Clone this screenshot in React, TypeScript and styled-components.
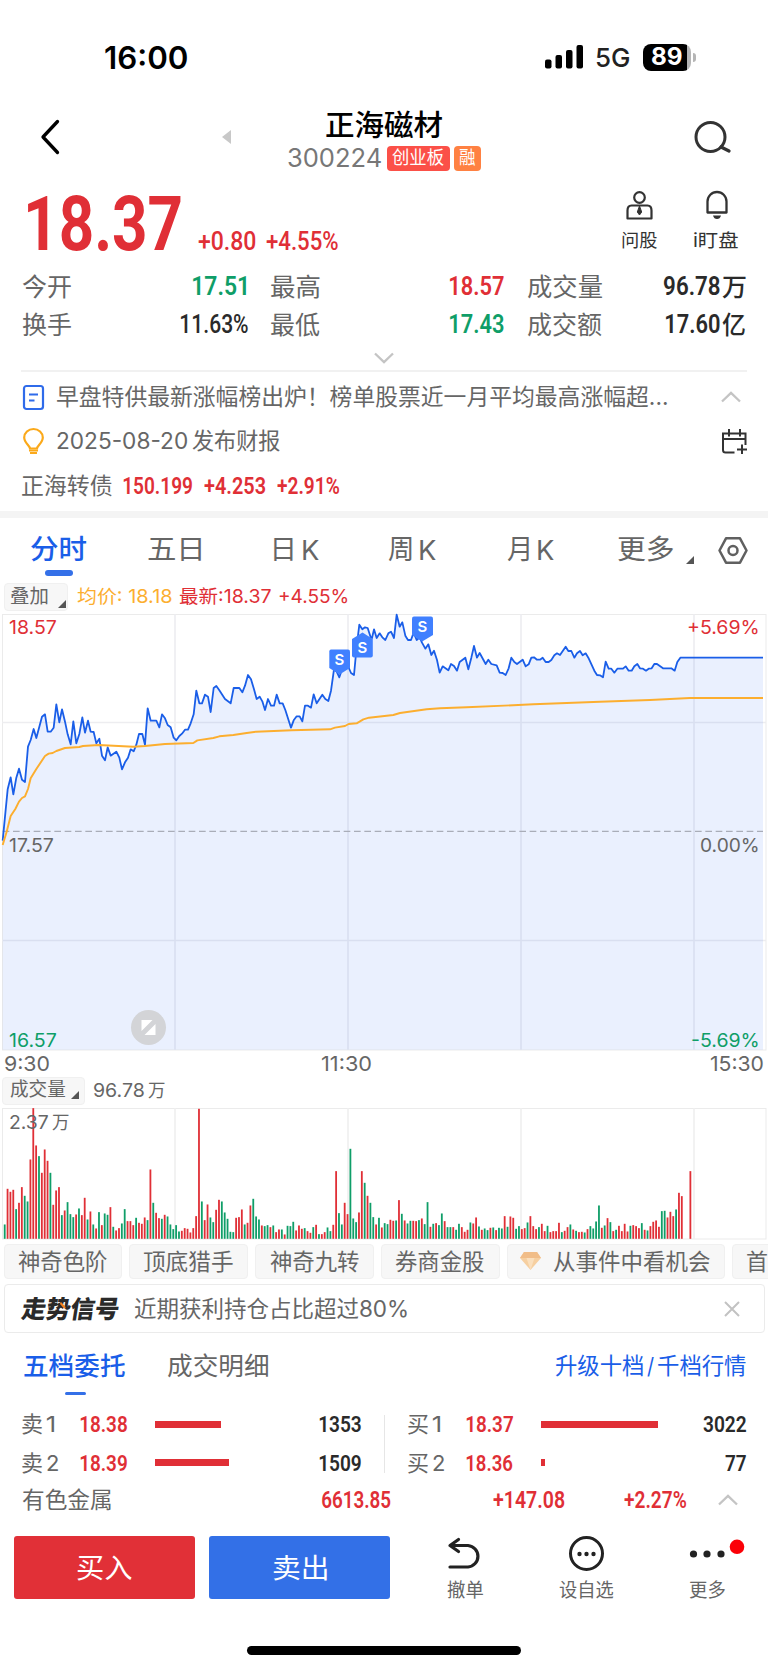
import React, { useLayoutEffect, useState } from "react";
import styled, { createGlobalStyle } from "styled-components";

const RED = "#e02f36";
const GREEN = "#0f9e68";
const BLUE = "#1a5ee8";
const INK = "#2a2a2a";
const GREY = "#666";
const SANS = 'Inter, "Noto Sans CJK SC", sans-serif';
const DIN = 'Roboto, "Noto Sans CJK SC", sans-serif';

const Global = createGlobalStyle`
  * { box-sizing: border-box; }
  body { margin: 0; background: #fff; font-family: ${SANS}; color: ${GREY}; }
  button { border: 0; padding: 0; font: inherit; background: none; }
`;

/* ---------- text whose glyph run fills a given width ---------- */

const TextBox = styled.span<{ $w: number; $ml: number; $dy: number }>`
  display: block;
  flex: none;
  width: ${(p) => p.$w}px;
  margin-left: ${(p) => p.$ml}px;
  margin-top: ${(p) => p.$dy}px;
  text-align: left;
`;

const TextRun = styled.span<{ $size: number; $weight: number; $color: string; $din?: boolean }>`
  display: inline-block;
  white-space: pre;
  line-height: 1;
  transform-origin: 0 50%;
  vertical-align: top;
  font-family: ${(p) => (p.$din ? DIN : SANS)};
  font-size: ${(p) => p.$size}px;
  font-weight: ${(p) => p.$weight};
  color: ${(p) => p.$color};
`;

type TProps = {
  t: string;
  w: number;
  s: number;
  c?: string;
  ml?: number;
  dy?: number;
  weight?: number;
  din?: boolean;
  skew?: number;
};

function T({ t, w, s, c = GREY, ml = 0, dy = 0, weight = 400, din, skew = 0 }: TProps) {
  const [transform, setTransform] = useState("none");
  useLayoutEffect(() => {
    const ctx = document.createElement("canvas").getContext("2d");
    if (!ctx) return;
    ctx.font = `${weight} ${s}px ${din ? DIN : SANS}`;
    const m = ctx.measureText(t);
    const k = w / (m.actualBoundingBoxRight + m.actualBoundingBoxLeft);
    setTransform(`translateX(${m.actualBoundingBoxLeft * k}px) scaleX(${k}) skewX(${-skew}deg)`);
  }, [t, w, s, weight, din, skew]);
  return (
    <TextBox $w={w} $ml={ml} $dy={dy}>
      <TextRun $size={s} $weight={weight} $color={c} $din={din} style={{ transform }}>
        {t}
      </TextRun>
    </TextBox>
  );
}

const Num = (p: TProps) => <T din weight={600} {...p} />;

/* ---------- layout parts ---------- */

const Page = styled.div`
  width: 768px;
  height: 1669px;
  overflow: hidden;
  background: #fff;
  display: flex;
  flex-direction: column;
`;

const Row = styled.div<{ $h: number; $pl?: number; $mt?: number }>`
  flex: none;
  display: flex;
  align-items: center;
  height: ${(p) => p.$h}px;
  padding-left: ${(p) => p.$pl ?? 22}px;
  margin-top: ${(p) => p.$mt ?? 0}px;
`;

const Icon = styled.svg<{ $ml?: number; $dy?: number }>`
  display: block;
  flex: none;
  fill: none;
  overflow: visible;
  margin-left: ${(p) => p.$ml ?? 0}px;
  margin-top: ${(p) => p.$dy ?? 0}px;
`;

const Battery = styled.div`
  position: relative;
  flex: none;
  width: 48px;
  height: 27px;
  margin-left: 14px;
  border-radius: 8px;
  background: linear-gradient(90deg, #000 44px, #b5b5b5 44px);
  display: flex;
  align-items: center;
  &::after {
    content: "";
    position: absolute;
    left: 50px;
    top: 9px;
    width: 3px;
    height: 9px;
    border-radius: 0 3px 3px 0;
    background: #b5b5b5;
  }
`;

const Header = styled.header`
  flex: none;
  height: 75px;
  margin-top: 31px;
  display: flex;
  align-items: center;
`;

const Titles = styled.div`
  width: 193px;
  margin: 0 0 5px 57px;
`;

const TitleLine = styled.div<{ $h: number; $pl?: number }>`
  height: ${(p) => p.$h}px;
  padding-left: ${(p) => p.$pl ?? 0}px;
  display: flex;
  align-items: center;
`;

const Tag = styled.span<{ $w: number; $ml: number; $bg: string }>`
  flex: none;
  width: ${(p) => p.$w}px;
  height: 25px;
  margin-left: ${(p) => p.$ml}px;
  padding-top: 1px;
  border-radius: 4px;
  background: ${(p) => p.$bg};
  display: flex;
  align-items: center;
  justify-content: center;
`;

const Quote = styled.section`
  flex: none;
  height: 78px;
  padding-left: 28px;
  display: flex;
`;

const Tool = styled.button<{ $w: number; $ml: number }>`
  width: ${(p) => p.$w}px;
  margin-left: ${(p) => p.$ml}px;
  display: flex;
  flex-direction: column;
  align-items: center;
`;

const Divider = styled.hr`
  flex: none;
  width: 726px;
  height: 2px;
  margin: 3px 0 0 21px;
  border: 0;
  background: #f1f1f1;
`;

const Band = styled.div`
  flex: none;
  height: 7px;
  margin-top: 2px;
  background: #f4f4f4;
`;

const Marker = styled.div<{ $w: number; $h: number; $ml: number; $mt: number }>`
  flex: none;
  width: ${(p) => p.$w}px;
  height: ${(p) => p.$h}px;
  margin: ${(p) => p.$mt}px 0 0 ${(p) => p.$ml}px;
  border-radius: 3px;
  background: #3470e8;
`;

const Chip = styled.button<{ $w: number; $h: number; $ml?: number }>`
  flex: none;
  width: ${(p) => p.$w}px;
  height: ${(p) => p.$h}px;
  margin-left: ${(p) => p.$ml ?? 0}px;
  padding-top: 1px;
  border: 1px solid #f0f0f0;
  border-radius: 4px;
  background: #f7f7f7;
  display: flex;
  align-items: center;
`;

const ChartBox = styled.div<{ $h: number; $mt: number }>`
  position: relative;
  flex: none;
  width: 768px;
  height: ${(p) => p.$h}px;
  margin-top: ${(p) => p.$mt}px;
  & > svg { display: block; }
`;

const Label = styled.div<{ $x: number; $y: number }>`
  position: absolute;
  left: ${(p) => p.$x}px;
  top: ${(p) => p.$y}px;
`;

const SignalBox = styled.div`
  flex: none;
  width: 761px;
  height: 49px;
  margin: 5px 0 0 4px;
  padding: 1px 0 0 17px;
  border: 1px solid #ebebeb;
  border-radius: 4px;
  display: flex;
  align-items: center;
`;

const Logo = styled.div`
  position: relative;
  & > svg {
    position: absolute;
    left: 38px;
    top: 5px;
  }
`;

const Book = styled.div`
  flex: none;
  height: 77px;
  margin-top: 10px;
  display: flex;
  align-items: center;
`;

const BookSide = styled.div<{ $w: number }>`
  width: ${(p) => p.$w}px;
`;

const BookRule = styled.div`
  width: 1px;
  height: 58px;
  background: #e6e6e6;
`;

const DepthSlot = styled.div<{ $w: number; $ml: number }>`
  flex: none;
  width: ${(p) => p.$w}px;
  margin-left: ${(p) => p.$ml}px;
`;

const DepthBar = styled.div<{ $w: number }>`
  width: ${(p) => p.$w}px;
  height: 7px;
  background: ${RED};
`;

const Trade = styled.button<{ $bg: string; $ml: number }>`
  flex: none;
  width: 181px;
  height: 63px;
  margin-left: ${(p) => p.$ml}px;
  padding-top: 2px;
  border-radius: 3px;
  background: ${(p) => p.$bg};
  display: flex;
  align-items: center;
  justify-content: center;
`;

const Actions = styled.div`
  flex: none;
  height: 63px;
  margin-top: 18px;
  display: flex;
`;

const HomeBar = styled.div`
  flex: none;
  width: 274px;
  height: 9px;
  margin: 47px 0 0 247px;
  border-radius: 5px;
  background: #000;
`;

/* ---------- chart data, in thirds of a pixel ---------- */

const PRICE_A =
  "8,722 23,568 32,532 40,583 49,533 57,506 66,539 75,546 84,440 92,420 101,387 109,414 126,350 135,343 143,395 152,395 161,383 169,313 178,367 186,328 195,365 203,403 212,433 220,364 229,430 238,402 247,352 255,398 264,362 272,395 281,396 289,430 298,416 306,467 315,481 323,442 332,467 349,455 358,473 366,508 375,487 384,473 392,448 401,454 409,434 417,402 427,402 435,434 443,325 452,362 469,362 478,382 486,343 495,355 503,375 512,382 521,413 529,421 538,408 546,401 555,389 564,389 572,370 581,343 589,272 598,310 606,310 615,284 624,290 632,336 641,264 649,258 658,271 675,297 692,310 701,264 718,264 727,277 735,257 744,225 ";
const PRICE_B =
  "753,238 762,268 770,297 779,290 787,304 795,330 804,297 813,317 822,317 830,284 839,310 848,310 856,330 873,383 881,361 890,349 899,349 907,364 915,317 924,317 933,323 941,283 950,310 967,284 976,297 985,303 993,272 1002,208 1010,215 1018,232 1027,205 1044,198 1053,219 1062,225 1070,140 1078,74 1087,88 1095,82 1103,84 1112,112 1116,114 1122,88 1130,114 1139,100 1147,112 1156,120 1165,100 1173,95 1182,114 1190,44 1199,80 1207,67 1216,107 1224,120 1233,120 1241,98 1250,120 1259,112 ";
const PRICE_C =
  "1266,128 1276,146 1285,133 1294,165 1302,152 1311,180 1319,218 1328,199 1345,211 1353,192 1362,198 1371,212 1379,186 1396,173 1405,208 1414,173 1422,138 1431,173 1439,159 1457,192 1465,179 1474,192 1490,196 1499,218 1508,219 1517,225 1526,205 1534,173 1543,186 1551,192 1568,179 1577,199 1586,193 1594,173 1602,172 1611,179 1620,179 1628,173 1637,186 1646,186 1654,180 1663,166 1671,160 1680,165 1697,140 1705,153 1714,153 1723,173 1731,160 1740,153 1748,166 1757,160 1765,173 1783,212 1791,225 1800,226 1809,232 1817,185 1826,206 1834,206 1843,218 1852,206 1869,206 1877,199 1886,212 1895,212 1903,199 1912,192 1920,205 1929,206 1938,212 1946,206 1955,205 1963,192 1971,192 1989,205 2014,205 2024,212 2032,186 2041,173 2289,173";
const PRICE = PRICE_A + PRICE_B + PRICE_C;

const AVERAGE =
  "8,735 20,695 32,648 46,627 57,605 66,594 75,589 84,567 92,535 109,507 135,468 146,461 158,459 169,453 195,444 238,441 249,438 296,435 400,440 435,438 495,432 580,429 592,421 640,414 658,409 700,405 740,399 768,395 875,391 990,388 1005,383 1035,378 1046,372 1070,370 1090,358 1107,353 1180,345 1200,339 1280,328 1320,325 1400,322 1600,313 1800,305 1950,300 2070,294 2289,294";

// One entry per minute; positive closes up, negative closes down.
const VOLUME = [
  -43, 150, 141, 147, -89, 108, 155, -129, -112, 238, 392, 280, -248, 198, 268, 234, -198, 102, 145, 155, -71, 85, -110,
  -74, -65, 73, -91, 71, 123, -58, 82, -43, 31, -80, 41, -76, -72, 95, -36, 25, 32, -46, -89, 53, 53, 41, -63, 48, 45,
  64, -56, 208, -108, 78, 62, -60, 72, -67, -43, -29, -41, -22, 24, 32, 30, 19, 32, 68, 390, -112, 56, 103, -64, -50,
  87, 117, -112, -79, -60, -21, -20, 63, 65, 88, -43, 48, 100, -120, -67, -58, 40, -38, -41, 35, -40, 20, 28, -28, 13,
  -39, -38, -51, 25, 40, 30, -32, 23, 18, -35, 42, -14, 14, 20, -34, -23, 42, 203, -77, -43, 108, 74, -270, -61, -50,
  79, 203, -168, 129, -108, -65, 43, -63, 34, -47, -44, 57, 54, -55, 116, -75, 55, -46, -54, 54, 53, -56, 61, -44, -110,
  36, -45, 47, -41, -76, 53, -35, -35, 35, -27, -45, 35, 21, 27, -49, 46, 64, -37, 27, -31, -26, 33, -34, 26, -33, -31,
  68, -36, 67, 63, -30, -38, 29, 32, -49, 68, 38, 29, -35, 45, 23, -39, 20, 23, 23, 48, -20, 24, 35, -43, 28, -24, 20,
  21, -19, 29, -38, -31, -52, -100, 33, -40, 62, -50, 23, -27, 39, 23, 45, 22, -39, 41, 38, 32, -47, 27, -25, 38, 51,
  55, 36, -83, -84, 64, 81, 68, -88, 138, 128, 0, 0, 203,
];

const GRID_X = [175, 348, 521, 694];

function PriceChart() {
  return (
    <svg width="768" height="438" viewBox="0 613 768 438">
      <rect x="2.5" y="614.5" width="763.5" height="435.5" fill="none" stroke="#ebebeb" />
      {GRID_X.map((x) => (
        <line key={x} x1={x} x2={x} y1="614" y2="1050" stroke="#ededf0" strokeWidth="1.6" />
      ))}
      <path d="M2 722.5H766M2 940.5H766" stroke="#ededf0" strokeWidth="1.6" />
      <g transform="translate(0 600) scale(.33333)" fill="none" strokeLinejoin="round">
        <polygon points={`8,1349 ${PRICE} 2289,1349`} fill="#2f6bf2" fillOpacity=".1" />
        <line x1="8" x2="2289" y1="694" y2="694" stroke="#a9adb8" strokeWidth="3.6" strokeDasharray="20 11" />
        <polyline points={PRICE} stroke={BLUE} strokeWidth="5.4" />
        <polyline points={AVERAGE} stroke="#fcae2f" strokeWidth="5.8" />
      </g>
      <g fill="#4080ff">
        <path d="M331 649.5h17q2 0 2 2V668l-10.5 6.5L329.3 668v-16.5q0-2 1.7-2Z" />
        <path d="M352 639l10.5-6.5 10.3 6.5v16.5q0 2-2 2h-16.8q-2 0-2-2Z" />
        <path d="M414 616.5h17q2 0 2 2V635l-10.8 6.5L412 635v-16.5q0-2 2-2Z" />
      </g>
      <g fill="#fff" fontFamily="Inter" fontSize="15" fontWeight="600" textAnchor="middle">
        <text x="339.5" y="665.3">S</text>
        <text x="362.3" y="652.8">S</text>
        <text x="422.3" y="632">S</text>
      </g>
      <circle cx="148.5" cy="1027.5" r="17.5" fill="#d3d4d7" />
      <path d="M141.5 1031v-11h11ZM155.5 1024v11h-11Z" fill="#fff" />
    </svg>
  );
}

function VolumeChart() {
  return (
    <svg width="768" height="133" viewBox="0 1107 768 133">
      <rect x="2.5" y="1108.5" width="763.5" height="130.5" fill="none" stroke="#ebebeb" />
      {GRID_X.map((x) => (
        <line key={x} x1={x} x2={x} y1="1108" y2="1239" stroke="#efefef" strokeWidth="1.6" />
      ))}
      {VOLUME.map((v, i) => {
        const h = Math.abs(v) / 3;
        return (
          <rect key={i} x={3.8 + i * 2.857} y={1238.8 - h} width="1.8" height={h} fill={v > 0 ? RED : GREEN} />
        );
      })}
    </svg>
  );
}

const Corner = ({ ml, dy = 14 }: { ml: number; dy?: number }) => (
  <Icon $ml={ml} $dy={dy} width="8" height="8" viewBox="0 0 8 8">
    <path d="M8 0v8H0Z" fill="#555" />
  </Icon>
);

const Caret = ({ ml, up }: { ml: number; up?: boolean }) => (
  <Icon $ml={ml} width="20" height="10" viewBox="0 0 20 10">
    <path d={up ? "M1 9.5 10 .8l9 8.7" : "M1 .5l9 8.7L19 .5"} stroke="#c4c4c4" strokeWidth="2.3" />
  </Icon>
);

const ASKS = [
  { side: "卖", n: "1", nw: 7, price: "18.38", bar: 66, qty: "1353" },
  { side: "卖", n: "2", nw: 11, price: "18.39", bar: 74, qty: "1509" },
];
const BIDS = [
  { side: "买", n: "1", nw: 7, price: "18.37", bar: 117, qty: "3022", qw: 43 },
  { side: "买", n: "2", nw: 11, price: "18.36", bar: 4, qty: "77", qw: 21 },
];

export default function App() {
  return (
    <Page>
      <Global />
      <Row $h={30} $pl={105} $mt={42}>
        <T t="16:00" w={82} s={31} weight={600} c="#000" />
        <Icon $ml={358} width="38" height="24" viewBox="0 0 38 24">
          <g fill="#000">
            <rect y="14.5" width="6.5" height="9" rx="2" />
            <rect x="10.5" y="10" width="6.5" height="13.5" rx="2" />
            <rect x="21" y="5" width="6.5" height="18.5" rx="2" />
            <rect x="31.5" width="6.5" height="23.5" rx="2" />
          </g>
        </Icon>
        <T t="5G" w={33} s={26} c="#222" ml={13} dy={2} weight={500} />
        <Battery>
          <T t="89" w={30} s={24} weight={700} c="#fff" ml={9} />
        </Battery>
      </Row>

      <Header>
        <Icon $ml={41} $dy={-8} width="18" height="34" viewBox="0 0 18 34">
          <path d="M16.5 1.5 2 17l14.5 15.5" stroke="#000" strokeWidth="3.3" strokeLinecap="round" strokeLinejoin="round" />
        </Icon>
        <Icon $ml={163} $dy={-8} width="9" height="14" viewBox="0 0 9 14">
          <path d="M9 0v14L0 7Z" fill="#c8c8c8" />
        </Icon>
        <Titles>
          <TitleLine $h={40} $pl={38}>
            <T t="正海磁材" w={116} s={29} weight={500} c="#000" />
          </TitleLine>
          <TitleLine $h={26}>
            <T t="300224" w={93} s={25} c="#777" />
            <Tag $w={63} $ml={5.5} $bg="#fb5048">
              <T t="创业板" w={52} s={18} c="#fff" />
            </Tag>
            <Tag $w={27.5} $ml={4} $bg="#ff8142">
              <T t="融" w={16.5} s={18} c="#fff" />
            </Tag>
          </TitleLine>
        </Titles>
        <Icon $ml={214} $dy={-8} width="36" height="34" viewBox="0 0 36 34">
          <circle cx="15.5" cy="17" r="14.5" stroke="#333" strokeWidth="3" />
          <path d="m26 27 8 4" stroke="#333" strokeWidth="3.3" strokeLinecap="round" />
        </Icon>
      </Header>

      <Quote>
        <Num t="18.37" w={153} s={76} c={RED} dy={8} weight={700} />
        <Num t="+0.80" w={58} s={25.5} c={RED} ml={17} dy={51} weight={500} />
        <Num t="+4.55%" w={72} s={25.5} c={RED} ml={10} dy={51} weight={500} />
        <Tool $w={38} $ml={282}>
          <Icon $dy={13} width="27" height="29" viewBox="0 0 27 29" stroke="#333" strokeWidth="2.2">
            <circle cx="13.5" cy="6.5" r="5.3" />
            <path d="M5.5 14.5h16q4 0 4 5V27.5h-24v-8q0-5 4-5Z" strokeLinejoin="round" />
            <path d="m13.5 15 2.2 6-2.2 3-2.2-3Z" fill="#333" strokeWidth="1" />
          </Icon>
          <T t="问股" w={35} s={18.5} c="#333" dy={11} />
        </Tool>
        <Tool $w={46} $ml={35}>
          <Icon $ml={2} $dy={13} width="22" height="29" viewBox="0 0 22 29">
            <path d="M1.5 21.5V10.5a9.5 9.5 0 0 1 19 0v11Z" stroke="#333" strokeWidth="2.3" strokeLinejoin="round" />
            <path d="M7 24.5h8q-1 3.5-4 3.5t-4-3.5Z" fill="#333" />
          </Icon>
          <T t="i盯盘" w={44} s={18.5} c="#333" dy={11} />
        </Tool>
      </Quote>

      <Row $h={38} $mt={12}>
        <T t="今开" w={49} s={25} />
        <Num t="17.51" w={53} s={25.5} c={GREEN} ml={122} />
        <T t="最高" w={49} s={25} ml={25} />
        <Num t="18.57" w={54} s={25.5} c={RED} ml={130} />
        <T t="成交量" w={75} s={25} ml={23} />
        <Num t="96.78" w={56} s={25.5} c={INK} ml={62} />
        <T t="万" w={24} s={25} c={INK} weight={500} ml={2} />
      </Row>
      <Row $h={38}>
        <T t="换手" w={49} s={25} />
        <Num t="11.63%" w={67} s={25.5} c={INK} ml={110} weight={500} />
        <T t="最低" w={49} s={25} ml={23} />
        <Num t="17.43" w={54} s={25.5} c={GREEN} ml={130} />
        <T t="成交额" w={75} s={25} ml={23} />
        <Num t="17.60" w={54} s={25.5} c={INK} ml={64} />
        <T t="亿" w={23} s={25} c={INK} weight={500} ml={2} />
      </Row>
      <Row $h={19} $pl={0} $mt={4}>
        <Caret ml={374} />
      </Row>
      <Divider style={undefined} />

      <Row $h={46} $mt={2} $pl={23}>
        <Icon width="21" height="25" viewBox="0 0 21 25" stroke="#2f6bea" strokeWidth="2.2">
          <rect x="1" y="1" width="19" height="23" rx="2.5" />
          <path d="M6 9.5h9M6 15.5h5.5" />
        </Icon>
        <T t="早盘特供最新涨幅榜出炉！榜单股票近一月平均最高涨幅超..." w={610} s={22.6} ml={13} />
        <Caret ml={54} up />
      </Row>
      <Row $h={40} $mt={1} $pl={23}>
        <Icon width="21" height="26" viewBox="0 0 21 26" stroke="#fba91a" strokeWidth="2.2">
          <path d="M7 20.5c0-3-5.8-5.5-5.8-11a9.3 8.5 0 0 1 18.6 0c0 5.5-5.8 8-5.8 11Z" />
          <path d="M6 22.5h9M7 25h7" />
        </Icon>
        <T t="2025-08-20" w={130} s={22.5} ml={13} />
        <T t="发布财报" w={88} s={22.5} ml={4.5} />
        <Icon $ml={442} width="25" height="25" viewBox="0 0 25 25" stroke="#333" strokeWidth="2">
          <path d="M12.5 23.5H3.5q-2.5 0-2.5-2.5V4.5h22.5V16M1 10h22.5M7 0v7.5M18 0v7.5M20 15.5v9.5M15 20.5h10" />
        </Icon>
      </Row>
      <Row $h={46} $mt={2}>
        <T t="正海转债" w={90} s={22.5} />
        <Num t="150.199" w={69} s={23} c={RED} ml={11} />
        <Num t="+4.253" w={61} s={23} c={RED} ml={12} />
        <Num t="+2.91%" w={62} s={23} c={RED} ml={12} />
      </Row>
      <Band />

      <Row $h={50} $pl={30.5} $mt={7}>
        <T t="分时" w={55.5} s={27.5} c={BLUE} weight={500} />
        <T t="五日" w={53} s={27.5} ml={62} />
        <T t="日" w={19} s={27.5} ml={72.5} />
        <T t="K" w={16.5} s={26.5} ml={10.5} />
        <T t="周" w={24} s={27.5} ml={68} />
        <T t="K" w={16.5} s={26.5} ml={8.5} />
        <T t="月" w={22} s={27.5} ml={70} />
        <T t="K" w={16.5} s={26.5} ml={9} />
        <T t="更多" w={55} s={27.5} ml={64} />
        <Corner ml={12.5} dy={20} />
        <Icon $ml={24} width="30" height="27" viewBox="0 0 30 27" stroke="#606060" strokeWidth="2.5" strokeLinejoin="round">
          <path d="M8 1.3h14L28.5 13.5 22 25.7H8L1.5 13.5Z" />
          <circle cx="15" cy="13.5" r="4.5" />
        </Icon>
      </Row>
      <Marker $w={28} $h={6} $ml={45} $mt={-5} />

      <Row $h={28} $pl={4} $mt={7}>
        <Chip $w={64} $h={28}>
          <T t="叠加" w={37} s={18.8} ml={6} />
          <Corner ml={10} dy={12} />
        </Chip>
        <T t="均价: 18.18" w={95} s={18.6} c="#fcae2f" ml={9} />
        <T t="最新:18.37" w={92} s={18.6} c={RED} ml={7} />
        <T t="+4.55%" w={69} s={18.6} c={RED} ml={8} />
      </Row>

      <ChartBox $h={438} $mt={2}>
        <PriceChart />
        <Label $x={9} $y={5}><T t="18.57" w={47} s={19} c={RED} /></Label>
        <Label $x={688} $y={5}><T t="+5.69%" w={70} s={19} c={RED} /></Label>
        <Label $x={9} $y={223}><T t="17.57" w={44} s={19} /></Label>
        <Label $x={701} $y={223}><T t="0.00%" w={57} s={19} /></Label>
        <Label $x={9} $y={418}><T t="16.57" w={47} s={19} c={GREEN} /></Label>
        <Label $x={692} $y={418}><T t="-5.69%" w={66} s={19} c={GREEN} /></Label>
      </ChartBox>

      <Row $h={25} $pl={4.5}>
        <T t="9:30" w={44} s={20.5} dy={1} />
        <T t="11:30" w={50} s={20.5} ml={272.5} dy={1} />
        <T t="15:30" w={53} s={20.5} ml={339} dy={1} />
      </Row>
      <Row $h={28} $pl={2} $mt={0.5}>
        <Chip $w={83} $h={28}>
          <T t="成交量" w={55} s={18.8} ml={6.5} />
          <Corner ml={6} dy={8} />
        </Chip>
        <T t="96.78" w={50} s={19} ml={8.5} />
        <T t="万" w={17} s={18.5} ml={4} />
      </Row>

      <ChartBox $h={133} $mt={2.5}>
        <VolumeChart />
        <Label $x={9.5} $y={6}>
          <TitleLine $h={19}>
            <T t="2.37" w={38} s={19} />
            <T t="万" w={17} s={18.5} ml={4} />
          </TitleLine>
        </Label>
      </ChartBox>

      <Row $h={35} $pl={4} $mt={4}>
        <Chip $w={118} $h={35}><T t="神奇色阶" w={89} s={22.5} ml={13} /></Chip>
        <Chip $w={119} $h={35} $ml={7}><T t="顶底猎手" w={89} s={22.5} ml={14} /></Chip>
        <Chip $w={119} $h={35} $ml={7}><T t="神奇九转" w={89} s={22.5} ml={13.5} /></Chip>
        <Chip $w={119} $h={35} $ml={7}><T t="券商金股" w={89} s={22.5} ml={13} /></Chip>
        <Chip $w={218} $h={35} $ml={7}>
          <Icon $ml={11.5} $dy={-2} width="21" height="18" viewBox="0 0 21 18">
            <path d="M4 0h13l4 6-10.5 12L0 6Z" fill="#f6cfa0" />
            <path d="M4 0h13l4 6H0Z" fill="#f1bd88" />
            <path d="m6.5 6 4 12 4-12Z" fill="#fadfbd" />
          </Icon>
          <T t="从事件中看机会" w={157} s={22.5} ml={12} />
        </Chip>
        <Chip $w={60} $h={35} $ml={7}><T t="首" w={20.5} s={22.5} ml={14} /></Chip>
      </Row>

      <SignalBox>
        <Logo>
          <T t="走势信号" w={97} s={24.5} weight={900} c="#2a2a2a" skew={9} />
          <svg width="6" height="7" viewBox="0 0 6 7">
            <path d="M.5 1 5 6" stroke="#f58220" strokeWidth="2.2" />
          </svg>
        </Logo>
        <T t="近期获利持仓占比超过80%" w={273} s={22.5} ml={14.5} />
        <Icon $ml={318} width="14" height="14" viewBox="0 0 14 14">
          <path d="m0 0 14 14M14 0 0 14" stroke="#c2c2c2" strokeWidth="2" />
        </Icon>
      </SignalBox>

      <Row $h={40} $pl={24} $mt={13}>
        <T t="五档委托" w={101} s={25.5} c={BLUE} weight={500} />
        <T t="成交明细" w={101} s={25.5} ml={42} />
        <T t="升级十档" w={88} s={22.5} c={BLUE} ml={287} />
        <T t="/" w={7} s={22.5} c={BLUE} ml={3.5} />
        <T t="千档行情" w={88} s={22.5} c={BLUE} ml={4.5} />
      </Row>
      <Marker $w={21} $h={3.5} $ml={65} $mt={5.5} />

      <Book>
        <BookSide $w={384}>
          {ASKS.map((r) => (
            <Row $h={38.5} key={r.n}>
              <T t={r.side} w={20} s={22} />
              <T t={r.n} w={r.nw} s={22} ml={5} />
              <Num t={r.price} w={47} s={22.5} c={RED} ml={33 - r.nw} />
              <DepthSlot $w={164} $ml={28}><DepthBar $w={r.bar} /></DepthSlot>
              <Num t={r.qty} w={42} s={22.5} c={INK} />
            </Row>
          ))}
        </BookSide>
        <BookRule />
        <BookSide $w={383}>
          {BIDS.map((r) => (
            <Row $h={38.5} $pl={23} key={r.n}>
              <T t={r.side} w={20} s={22} />
              <T t={r.n} w={r.nw} s={22} ml={5} />
              <Num t={r.price} w={47} s={22.5} c={RED} ml={33 - r.nw} />
              <DepthSlot $w={205 - r.qw} $ml={28}><DepthBar $w={r.bar} /></DepthSlot>
              <Num t={r.qty} w={r.qw} s={22.5} c={INK} />
            </Row>
          ))}
        </BookSide>
      </Book>

      <Row $h={36}>
        <T t="有色金属" w={89} s={22.5} dy={1} />
        <Num t="6613.85" w={69} s={23} c={RED} ml={211} dy={1} />
        <Num t="+147.08" w={72} s={23} c={RED} ml={102} dy={1} />
        <Num t="+2.27%" w={62} s={23} c={RED} ml={59} dy={1} />
        <Caret ml={32} up />
      </Row>

      <Actions>
        <Trade $bg="#e13037" $ml={14}><T t="买入" w={55} s={27.5} c="#fff" /></Trade>
        <Trade $bg="#3370e7" $ml={14}><T t="卖出" w={54} s={27.5} c="#fff" /></Trade>
        <Tool $w={38} $ml={56}>
          <Icon $dy={2} width="34" height="31" viewBox="0 0 34 31" stroke="#222" strokeWidth="3.2" strokeLinecap="round" strokeLinejoin="round">
            <path d="M10.5 1.5 2 7.5l8.5 6M2 7.5h18a11 10.8 0 0 1 0 21.5H2" />
          </Icon>
          <T t="撤单" w={36} s={18.8} dy={13} />
        </Tool>
        <Tool $w={56} $ml={74}>
          <Icon width="35" height="35" viewBox="0 0 35 35">
            <circle cx="17.5" cy="17.5" r="16" stroke="#222" strokeWidth="3" />
            <g fill="#222">
              <circle cx="10.5" cy="18" r="2.2" />
              <circle cx="17.5" cy="18" r="2.2" />
              <circle cx="24.5" cy="18" r="2.2" />
            </g>
          </Icon>
          <T t="设自选" w={55} s={18.8} dy={11} />
        </Tool>
        <Tool $w={38} $ml={74}>
          <Icon width="36" height="35" viewBox="0 0 36 35">
            <g fill="#222">
              <circle cx="4.5" cy="18" r="3.6" />
              <circle cx="18" cy="18" r="3.6" />
              <circle cx="32" cy="18" r="3.6" />
            </g>
            <circle cx="48" cy="10.8" r="7.3" fill="#fb0007" />
          </Icon>
          <T t="更多" w={36} s={18.8} dy={11} />
        </Tool>
      </Actions>
      <HomeBar />
    </Page>
  );
}
